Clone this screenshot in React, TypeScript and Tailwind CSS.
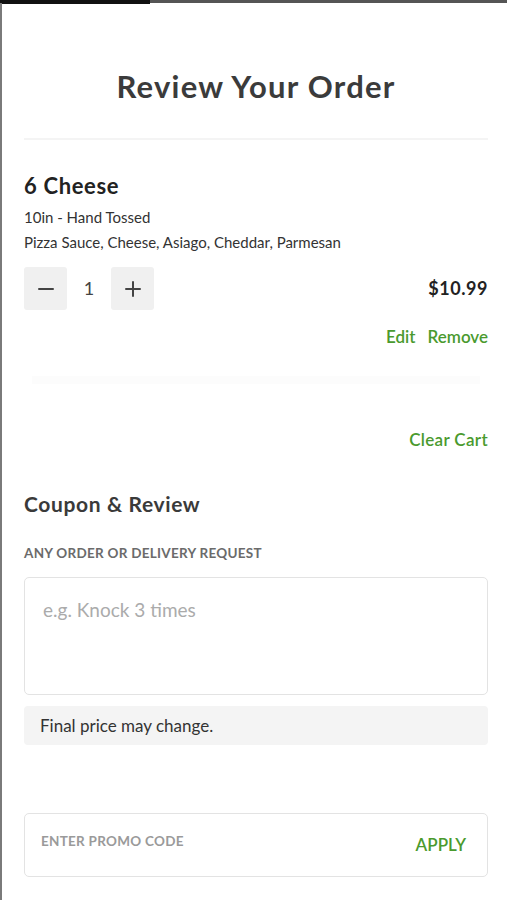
import React from 'react';

const font = { fontFamily: 'Lato, "Open Sans", sans-serif' };

function QtyButton({ kind }: { kind: 'minus' | 'plus' }) {
  return (
    <button className="flex h-[43px] w-[43px] items-center justify-center rounded-[3px] bg-[#f0f0f0]">
      <svg width="18" height="18" viewBox="0 0 18 18" stroke="#444" strokeWidth="2" strokeLinecap="round">
        <line x1="2" y1="9" x2="16" y2="9" />
        {kind === 'plus' && <line x1="9" y1="2" x2="9" y2="16" />}
      </svg>
    </button>
  );
}

export default function App() {
  return (
    <div className="min-h-[900px] w-[507px] bg-white" style={font}>
      {/* top progress strip */}
      <div className="h-[3px] w-full bg-[#555]">
        <div className="h-[4px] w-[150px] bg-[#111]" />
      </div>

      <div className="min-h-[897px] border-l-2 border-[#7a7a7a] pl-[22px] pr-[19px]">
        <h1 className="pt-[65px] text-center text-[31px] font-bold leading-[36px] tracking-[0.04em] text-[#3b3b3b]">
          Review Your Order
        </h1>
        <div className="mt-[34px] h-[2px] bg-[#f4f4f4]" />

        {/* cart item */}
        <div className="mt-[32px]">
          <h2 className="text-[22px] font-bold leading-[28px] tracking-[0.03em] text-[#222]">6 Cheese</h2>
          <p className="mt-[5px] text-[15px] leading-[25px] text-[#333]">10in - Hand Tossed</p>
          <p className="text-[15px] leading-[25px] text-[#333]">Pizza Sauce, Cheese, Asiago, Cheddar, Parmesan</p>

          <div className="mt-[12px] flex items-center justify-between">
            <div className="flex items-center">
              <QtyButton kind="minus" />
              <span className="w-[44px] text-center text-[18px] text-[#444]">1</span>
              <QtyButton kind="plus" />
            </div>
            <span className="text-[18px] font-bold tracking-[0.03em] text-[#222]">$10.99</span>
          </div>

          <div className="mt-[15px] flex justify-end gap-[12px] text-[17px] font-semibold leading-[24px] text-[#4a9a2e]">
            <button>Edit</button>
            <button>Remove</button>
          </div>
        </div>

        <div className="mx-[8px] mt-[27px] h-[8px] bg-[#fcfcfc]" />

        <div className="mt-[44px] flex justify-end">
          <button className="text-[17px] font-semibold leading-[24px] tracking-[0.02em] text-[#4a9a2e]">Clear Cart</button>
        </div>

        {/* coupon & review */}
        <h2 className="mt-[38px] text-[21px] font-bold leading-[28px] tracking-[0.03em] text-[#3a3a3a]">Coupon &amp; Review</h2>
        <p className="mt-[26px] text-[13.5px] font-bold uppercase leading-[18px] tracking-[0.02em] text-[#6b6b6b]">
          Any order or delivery request
        </p>
        <textarea
          className="mt-[15px] block h-[118px] w-full resize-none rounded-[5px] border border-[#e3e3e3] px-[18px] pt-[20px] text-[19px] leading-[24px] text-[#333] outline-none placeholder:text-[#ababab]"
          placeholder="e.g. Knock 3 times"
        />
        <div className="mt-[11px] flex h-[39px] items-center rounded-[4px] bg-[#f4f4f4] px-[16px] text-[17px] text-[#333]">
          Final price may change.
        </div>

        <div className="mt-[68px] flex h-[64px] items-start justify-between rounded-[5px] border border-[#e3e3e3] pl-[16px] pr-[21px]">
          <span className="mt-[18px] text-[13.5px] font-bold uppercase leading-[18px] tracking-[0.02em] text-[#9a9a9a]">
            Enter promo code
          </span>
          <button className="mt-[19px] text-[17px] font-semibold uppercase leading-[24px] text-[#4a9a2e]">Apply</button>
        </div>
      </div>
    </div>
  );
}
